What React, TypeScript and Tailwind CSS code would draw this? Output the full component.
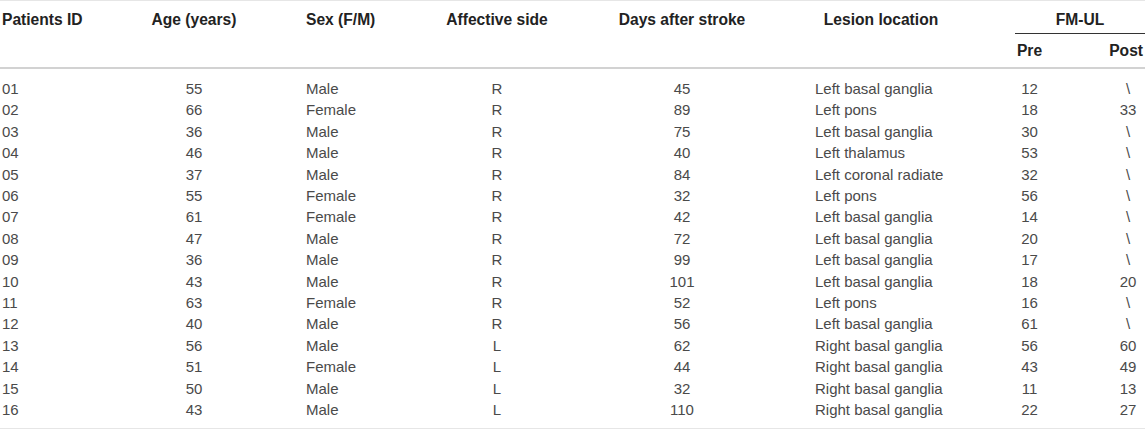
import React from "react";

const rows: string[][] = [
  ["01", "55", "Male", "R", "45", "Left basal ganglia", "12", "\\"],
  ["02", "66", "Female", "R", "89", "Left pons", "18", "33"],
  ["03", "36", "Male", "R", "75", "Left basal ganglia", "30", "\\"],
  ["04", "46", "Male", "R", "40", "Left thalamus", "53", "\\"],
  ["05", "37", "Male", "R", "84", "Left coronal radiate", "32", "\\"],
  ["06", "55", "Female", "R", "32", "Left pons", "56", "\\"],
  ["07", "61", "Female", "R", "42", "Left basal ganglia", "14", "\\"],
  ["08", "47", "Male", "R", "72", "Left basal ganglia", "20", "\\"],
  ["09", "36", "Male", "R", "99", "Left basal ganglia", "17", "\\"],
  ["10", "43", "Male", "R", "101", "Left basal ganglia", "18", "20"],
  ["11", "63", "Female", "R", "52", "Left pons", "16", "\\"],
  ["12", "40", "Male", "R", "56", "Left basal ganglia", "61", "\\"],
  ["13", "56", "Male", "L", "62", "Right basal ganglia", "56", "60"],
  ["14", "51", "Female", "L", "44", "Right basal ganglia", "43", "49"],
  ["15", "50", "Male", "L", "32", "Right basal ganglia", "11", "13"],
  ["16", "43", "Male", "L", "110", "Right basal ganglia", "22", "27"],
];

const cellCls = [
  "pl-[2px] text-left",
  "text-center",
  "pl-[58px] text-left",
  "text-center",
  "text-center",
  "pl-[25px] text-left",
  "text-center",
  "pl-[24px] text-center",
];

export default function App() {
  return (
    <div
      className="w-[1145px] bg-white"
      style={{ fontFamily: '"Liberation Sans", Arial, sans-serif' }}
    >
      <div className="border-t border-[#e6e6e6]">
        {/* Header */}
        <div className="grid h-[68px] grid-cols-[140px_108px_172px_154px_216px_182px_115px_58px] grid-rows-[33px_35px] border-b-2 border-[#d2d2d2] text-[15.6px] font-bold leading-[20px] text-[#222]">
          <div className="row-span-2 pl-[2px] pt-[9px] text-left">Patients ID</div>
          <div className="row-span-2 pt-[9px] text-center">Age (years)</div>
          <div className="row-span-2 pl-[58px] pt-[9px] text-left">Sex (F/M)</div>
          <div className="row-span-2 pt-[9px] text-center">Affective side</div>
          <div className="row-span-2 pt-[9px] text-center">Days after stroke</div>
          <div className="row-span-2 pt-[9px] text-center">Lesion location</div>
          <div className="col-span-2 ml-[43px] border-b border-[#333] pt-[9px] text-center">
            FM-UL
          </div>
          <div className="col-start-7 row-start-2 pt-[7px] text-center">Pre</div>
          <div className="col-start-8 row-start-2 pr-[2px] pt-[7px] text-right">Post</div>
        </div>
        {/* Body */}
        <div className="grid grid-cols-[140px_108px_172px_154px_216px_182px_115px_58px] border-b border-[#e6e6e6] pb-[7px] pt-[9px] text-[15px] leading-[21.4px] text-[#4a4a4a]">
          {rows.map((r, i) =>
            r.map((c, j) => (
              <div key={`${i}-${j}`} className={cellCls[j]}>
                {c}
              </div>
            ))
          )}
        </div>
      </div>
    </div>
  );
}
